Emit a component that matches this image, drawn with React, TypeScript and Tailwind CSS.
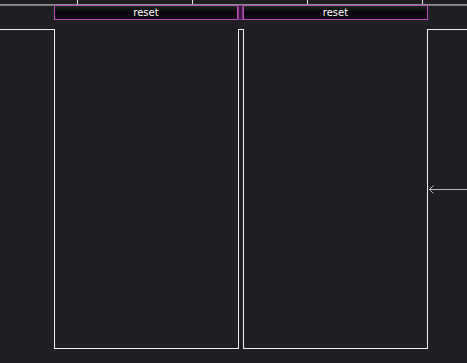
import React from "react";

function ResetButton({ w }: { w: string }) {
  return (
    <button
      className={`${w} h-[15px] border border-[#b850b6] bg-gradient-to-b from-[#1b2a1c] via-[#07030a] to-[#12031a] text-[10px] leading-[13px] text-white flex items-center justify-center`}
      style={{ fontFamily: '"DejaVu Sans", Verdana, sans-serif' }}
    >
      reset
    </button>
  );
}

export default function App() {
  return (
    <div className="w-[467px] h-[363px] bg-[#1e1e23] overflow-hidden flex flex-col">
      <div className="relative h-[4px]">
        <div className="absolute left-[77px] top-0 h-[4px] w-px bg-[#e8e8e8]" />
        <div className="absolute left-[192px] top-0 h-[4px] w-px bg-[#e8e8e8]" />
        <div className="absolute left-[307px] top-0 h-[4px] w-px bg-[#e8e8e8]" />
        <div className="absolute left-[422px] top-0 h-[4px] w-px bg-[#e8e8e8]" />
      </div>
      <div className="h-[2px] bg-gradient-to-b from-[#9a9a9a] to-[#6a6a6a]" />
      <div className="flex -mt-[1px] pl-[54px] relative">
        <ResetButton w="w-[184px]" />
        <div className="w-[5px] h-[15px] border border-[#8a3a88] bg-[#3a1440]" />
        <ResetButton w="w-[185px]" />
      </div>
      <div className="h-[9px]" />
      <div className="flex h-[320px]">
        <div className="w-[55px] border-t border-r border-[#f0f0f0]" />
        <div className="w-[183px] border-b border-[#f0f0f0]" />
        <div className="w-[6px] border-t border-l border-r border-[#f0f0f0]" />
        <div className="w-[183px] border-b border-[#f0f0f0]" />
        <div className="flex-1 border-t border-l border-[#f0f0f0] flex flex-col">
          <svg className="mt-[155px]" width="39" height="9" viewBox="0 0 39 9">
            <line x1="1.5" y1="4.5" x2="39" y2="4.5" stroke="#b8b8b8" strokeWidth="1" />
            <polyline points="5.5,0.5 1.5,4.5 5.5,8.5" fill="none" stroke="#b8b8b8" strokeWidth="1" />
          </svg>
        </div>
      </div>
    </div>
  );
}
